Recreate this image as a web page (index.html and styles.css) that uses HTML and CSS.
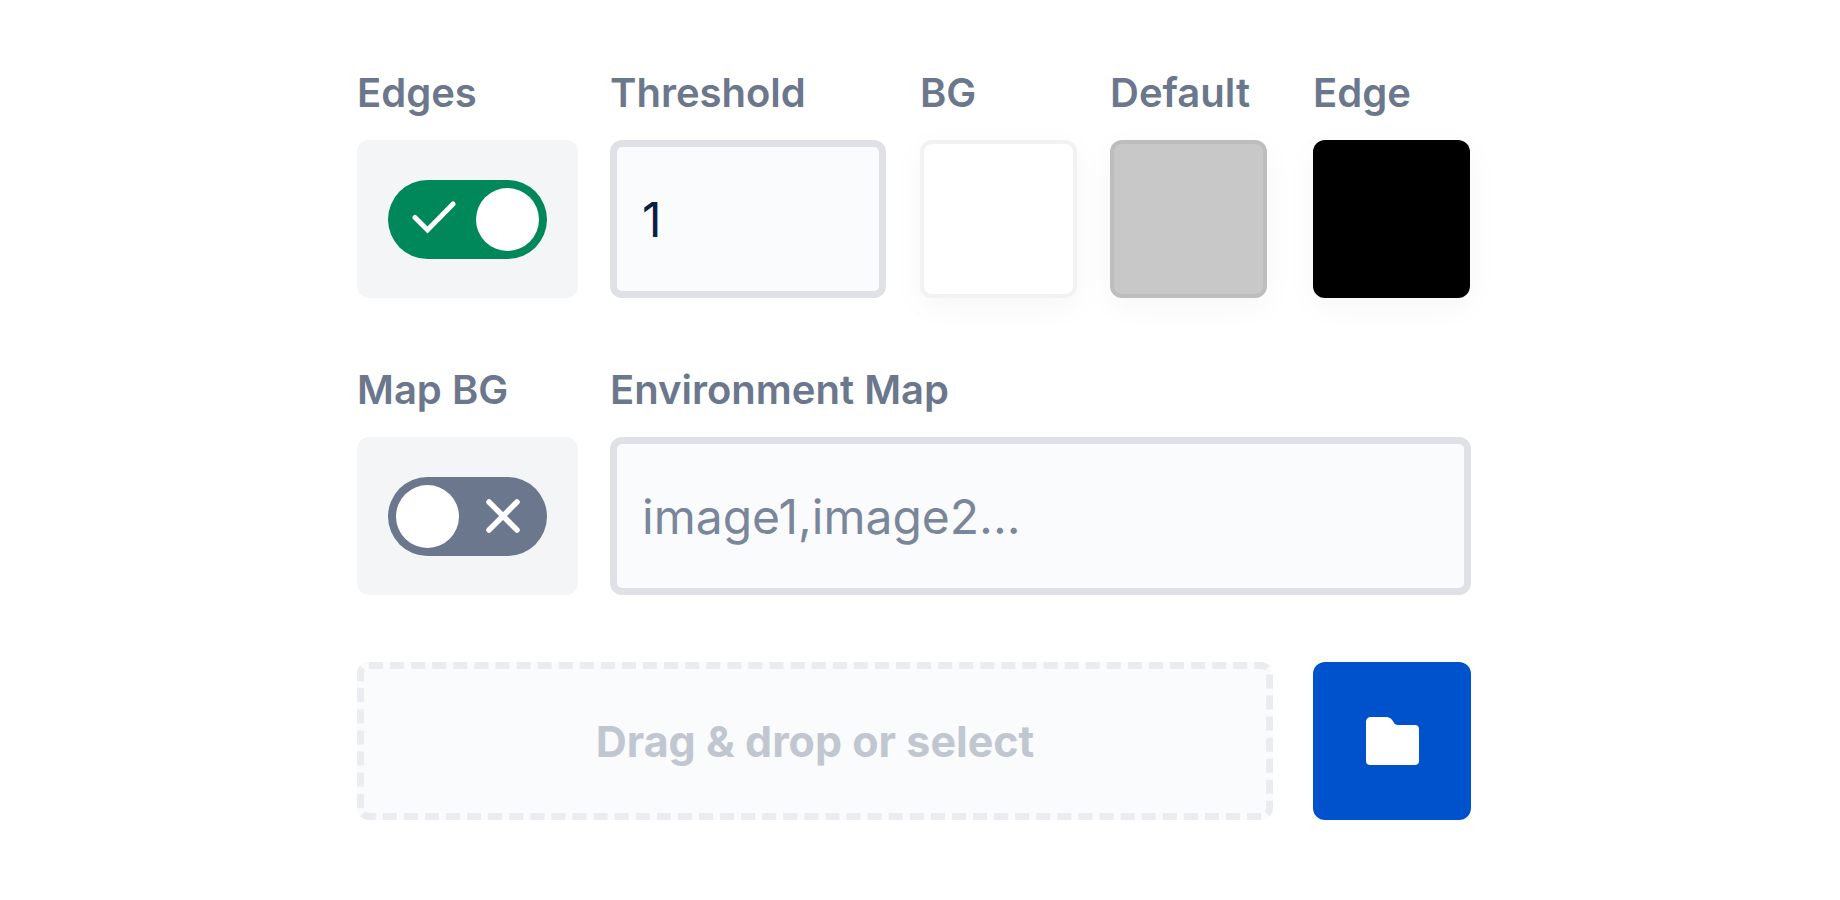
FILE: index.html
```html
<!DOCTYPE html>
<html lang="en">
<head>
    <title>Edge settings</title>
    <meta charset="UTF-8">
    <link rel="stylesheet" href="styles.css">
</head>
<body>
    <form class="panel">
        <div class="row row-top">
            <div class="field">
                <label class="field-label">Edges</label>
                <div class="toggle-box">
                    <div class="toggle toggle-on">
                        <svg class="toggle-icon" viewBox="0 0 48 38" width="48" height="38">
                            <path d="M3 17.5 L15.5 30 L41 4" fill="none" stroke="#fff" stroke-width="5" stroke-linecap="round"/>
                        </svg>
                        <span class="knob"></span>
                    </div>
                </div>
            </div>
            <div class="field">
                <label class="field-label">Threshold</label>
                <input class="text-input threshold" type="text" value="1">
            </div>
            <div class="field">
                <label class="field-label">BG</label>
                <div class="swatch swatch-bg"></div>
            </div>
            <div class="field">
                <label class="field-label">Default</label>
                <div class="swatch swatch-default"></div>
            </div>
            <div class="field">
                <label class="field-label">Edge</label>
                <div class="swatch swatch-edge"></div>
            </div>
        </div>

        <div class="row row-map">
            <div class="field">
                <label class="field-label">Map BG</label>
                <div class="toggle-box">
                    <div class="toggle toggle-off">
                        <span class="knob"></span>
                        <svg class="toggle-icon" viewBox="0 0 36 36" width="36" height="36">
                            <path d="M4 4 L32 32 M32 4 L4 32" fill="none" stroke="#fff" stroke-width="5.5" stroke-linecap="round"/>
                        </svg>
                    </div>
                </div>
            </div>
            <div class="field">
                <label class="field-label">Environment Map</label>
                <input class="text-input" type="text" placeholder="image1,image2...">
            </div>
        </div>

        <div class="row row-drop">
            <div class="dropzone">Drag &amp; drop or select</div>
            <button class="folder-btn" type="button">
                <svg viewBox="0 0 53 48" width="53" height="48">
                    <path d="M5 0 H20 C24 0 26 2.500 27.500 5 C28.500 7 29.500 8 32 8 H49 C51.500 8 53 9.500 53 12 V44 C53 46.500 51.500 48 49 48 H4 C1.500 48 0 46.500 0 44 V5 C0 2 2 0 5 0 Z" fill="#fff"/>
                </svg>
            </button>
        </div>
    </form>
</body>
</html>
```

FILE: styles.css
```css
body {
    margin: 0;
    background-color: #fff;
    font-family: Inter, "Liberation Sans", sans-serif;
}
.panel {
    width: 1114px;
    margin-left: 357px;
    padding-top: 68px;
}
.row {
    display: grid;
    column-gap: 32px;
    margin-bottom: 67px;
}
.row-top {
    grid-template-columns: 221px 278px 158px 171px 158px;
}
.row-map {
    grid-template-columns: 221px 861px;
}
.row-drop {
    grid-template-columns: 916px 158px;
    column-gap: 40px;
    margin-bottom: 0;
}
.field-label {
    display: block;
    height: 50px;
    margin-bottom: 22px;
    color: #6b778c;
    font-size: 40px;
    font-weight: 600;
    line-height: 50px;
    white-space: nowrap;
}
.toggle-box {
    display: flex;
    align-items: center;
    justify-content: center;
    width: 221px;
    height: 158px;
    background-color: #f4f5f7;
    border-radius: 12px;
}
.toggle {
    display: flex;
    align-items: center;
    justify-content: space-between;
    box-sizing: border-box;
    width: 159px;
    height: 79px;
    padding: 8px;
    border-radius: 40px;
}
.toggle-on {
    background-color: #00875a;
}
.toggle-off {
    background-color: #6b778c;
}
.toggle-on .toggle-icon {
    margin-left: 16px;
}
.toggle-off .toggle-icon {
    margin-right: 18px;
}
.knob {
    width: 63px;
    height: 63px;
    background-color: #fff;
    border-radius: 50%;
}
.text-input {
    box-sizing: border-box;
    width: 100%;
    height: 158px;
    padding: 0 25px;
    background-color: #fafbfc;
    border: 7.5px solid #dfe1e6;
    border-radius: 12px;
    color: #091e42;
    font-family: Inter, "Liberation Sans", sans-serif;
    font-size: 48px;
    outline: none;
}
.text-input::placeholder {
    color: #7a869a;
    opacity: 1;
}
.threshold {
    width: 276px;
}
.swatch {
    box-sizing: border-box;
    width: 157px;
    height: 158px;
    border: 4px solid rgba(0,0,0,0.05);
    border-radius: 12px;
    background-clip: border-box;
    box-shadow: 0 8px 32px rgba(0,0,0,0.04);
}
.swatch-bg {
    background-color: #fff;
}
.swatch-default {
    background-color: #c8c8c8;
}
.swatch-edge {
    background-color: #000;
}
.dropzone {
    display: flex;
    align-items: center;
    justify-content: center;
    box-sizing: border-box;
    height: 158px;
    background-color: #fafbfc;
    border: 7.5px dashed #ebecf0;
    border-radius: 12px;
    color: #c1c7d0;
    font-size: 43px;
    font-weight: 700;
}
.folder-btn {
    display: flex;
    align-items: center;
    justify-content: center;
    height: 158px;
    padding: 0;
    background-color: #0052cc;
    border: none;
    border-radius: 12px;
}
```
